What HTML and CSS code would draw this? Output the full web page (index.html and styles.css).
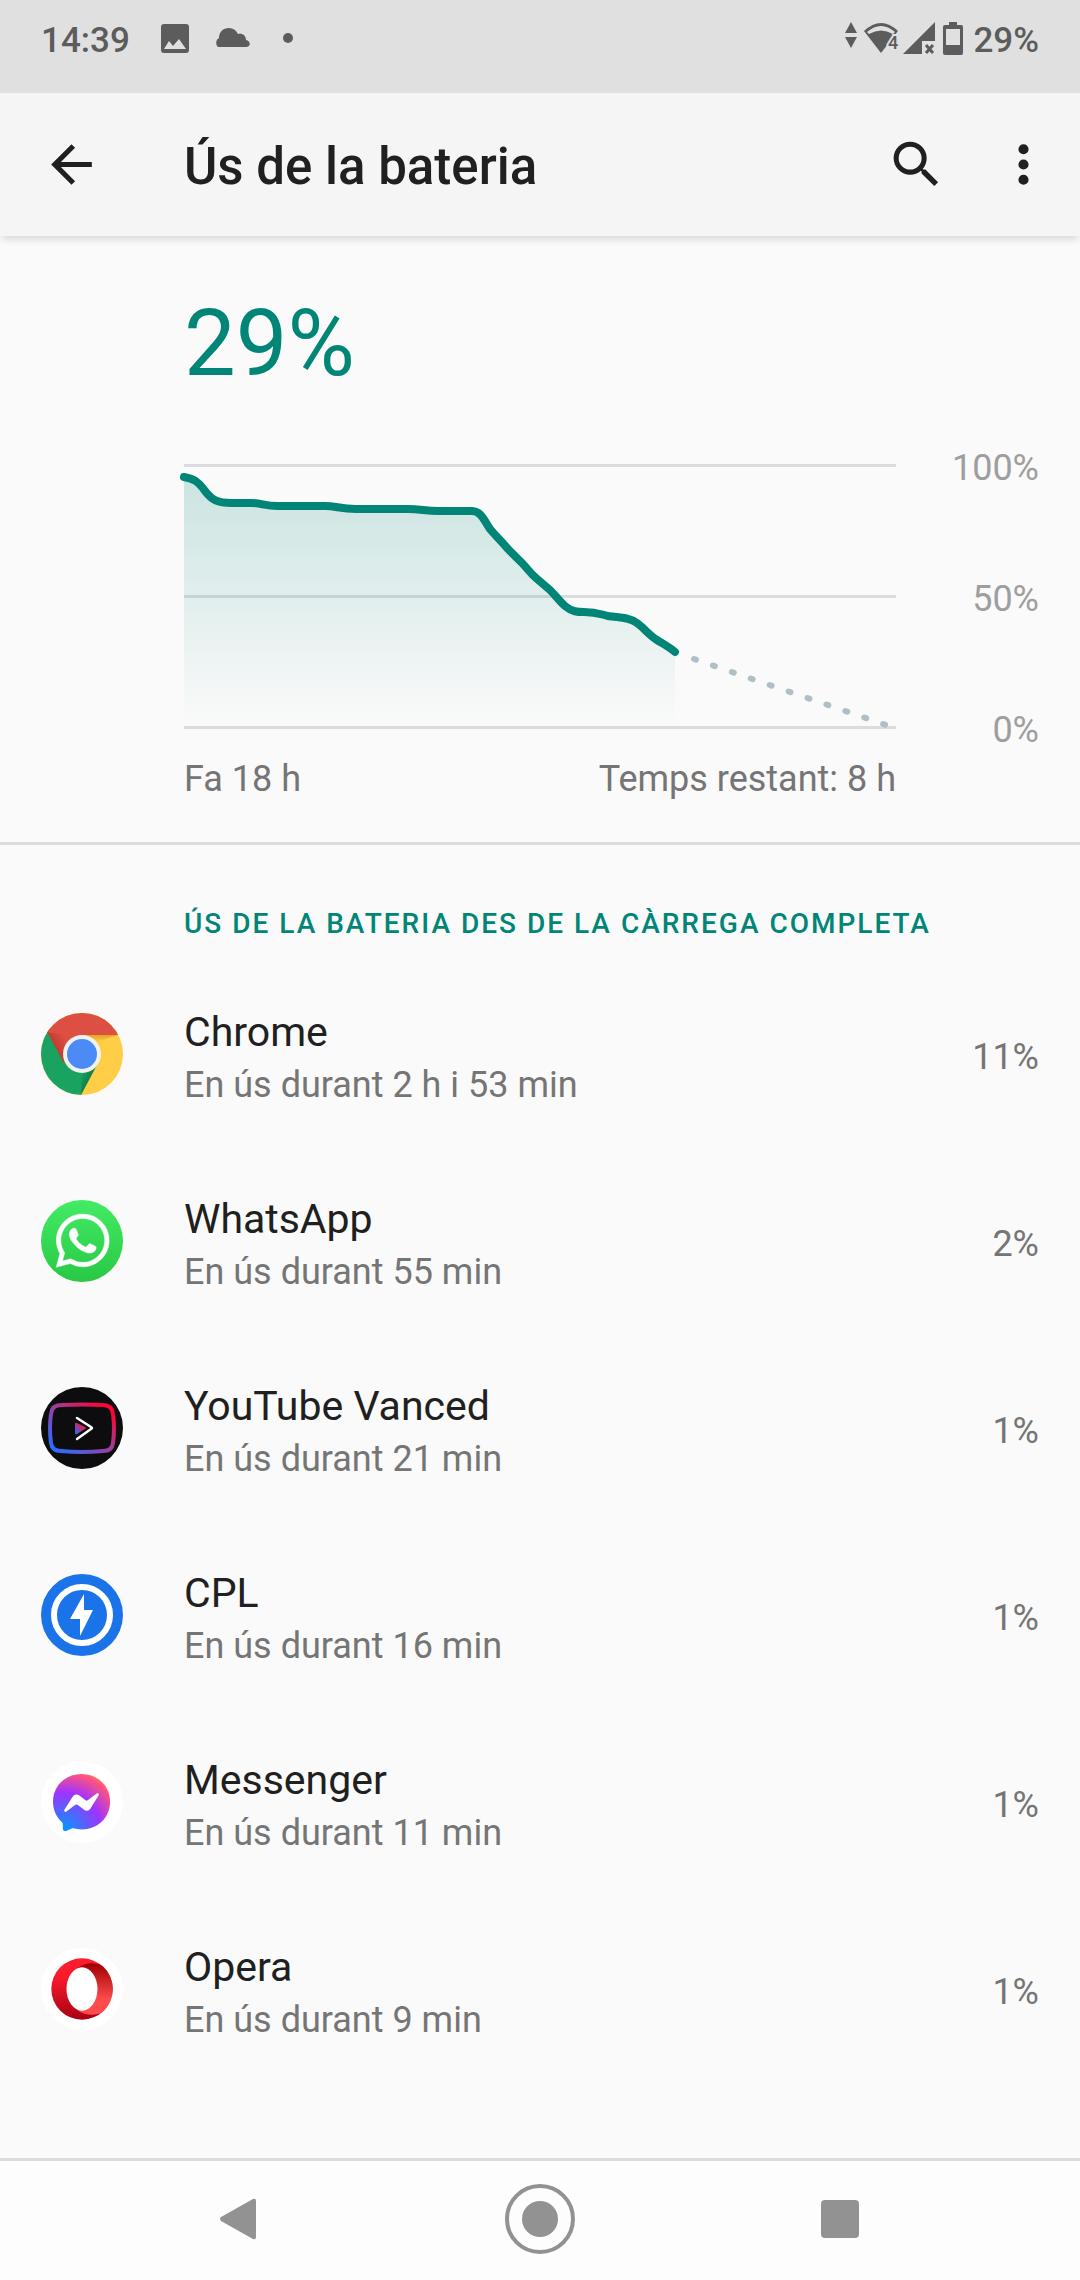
FILE: index.html
```
<!DOCTYPE html>
<html lang="ca">
<head>
	<meta charset="utf-8">
	<meta name="viewport" content="width=device-width, initial-scale=1">
	<title>Ús de la bateria</title>

	<link rel="stylesheet" href="styles.css">
</head>
<body>

	<div class="status-bar">
		<div class="status-left">
			<span class="clock">14:39</span>
			<svg class="status-icon" width="30" height="34" viewBox="0 0 30 34"><path fill-rule="evenodd" d="M4 3h22a3 3 0 0 1 3 3v23a3 3 0 0 1-3 3H4a3 3 0 0 1-3-3V6a3 3 0 0 1 3-3zM4 28h22l-7-10-6 7-4-5z"/></svg>
			<svg class="status-icon" width="36" height="34" viewBox="0 0 36 34"><path d="M4 26a4 5 0 0 1 1-9c0-6 4-10 10-10 4 0 7 2 9 6 5-1 8 2 8 6 5 1 5 7 0 7z"/></svg>
			<svg class="status-icon" width="20" height="34" viewBox="0 0 20 34"><circle cx="14" cy="17" r="5"/></svg>
		</div>
		<div class="status-right">
			<svg class="status-icon" width="10" height="34" viewBox="0 0 10 34"><path d="M5 1l6 11H-1zM-1 16h12L5 27z"/></svg>
			<svg class="status-icon" width="31" height="34" viewBox="0 0 31 34">
				<path d="M0 10Q17-6 34 10L17 32z"/>
				<path class="status-cut" d="M3 11Q17-1 31 11L29 13Q17 6 5 13z"/>
				<text class="wifi-digit" x="24" y="28">4</text>
			</svg>
			<svg class="status-icon" width="32" height="34" viewBox="0 0 32 34"><path d="M32 1v19H19v13H0z"/><path class="status-cross" d="M23 24l7 8M30 24l-7 8"/></svg>
			<svg class="status-icon" width="20" height="34" viewBox="0 0 20 34"><path fill-rule="evenodd" d="M6 1h8v3h4a2 2 0 0 1 2 2v26a2 2 0 0 1-2 2H2a2 2 0 0 1-2-2V6a2 2 0 0 1 2-2h4zM3 8v16h14V8z"/></svg>
			<span class="battery-level">29%</span>
		</div>
	</div>

	<header class="toolbar">
		<button class="icon-button" aria-label="Enrere">
			<svg width="61" height="61" viewBox="0 0 24 24"><path d="M20 11H7.83l5.59-5.59L12 4l-8 8 8 8 1.41-1.41L7.83 13H20z"/></svg>
		</button>
		<h1 class="title">Ús de la bateria</h1>
		<button class="icon-button" aria-label="Cerca">
			<svg width="61" height="61" viewBox="0 0 24 24"><path d="M15.5 14h-.79l-.28-.27A6.47 6.47 0 0 0 16 9.5 6.5 6.5 0 1 0 9.5 16c1.61 0 3.09-.59 4.23-1.57l.27.28v.79l5 4.99L20.49 19zm-6 0A4.5 4.5 0 1 1 14 9.5 4.5 4.5 0 0 1 9.5 14z"/></svg>
		</button>
		<button class="icon-button" aria-label="Més opcions">
			<svg width="61" height="61" viewBox="0 0 24 24"><path d="M12 8a2 2 0 1 0 0-4 2 2 0 0 0 0 4zm0 2a2 2 0 1 0 0 4 2 2 0 0 0 0-4zm0 6a2 2 0 1 0 0 4 2 2 0 0 0 0-4z"/></svg>
		</button>
	</header>

	<main class="content">
		<section class="summary">
			<div class="level">29%</div>
			<div class="chart">
				<svg class="graph" viewBox="0 0 712 265">
					<defs>
						<linearGradient id="fade" gradientUnits="userSpaceOnUse" x1="0" y1="0" x2="0" y2="262">
							<stop offset="0" stop-color="#008577" stop-opacity=".2"/>
							<stop offset="1" stop-color="#008577" stop-opacity="0"/>
						</linearGradient>
					</defs>
					<path class="grid-line" d="M0 0h712v3H0zM0 131h712v3H0zM0 262h712v3H0z"/>
					<path fill="url(#fade)" d="M0 13C10 15 14 17 21 27C28 36 33 39 48 39H67C78 39 80 42 94 42H141C152 42 156 45 172 45H224C236 45 242 47 254 47H288C296 47 299 54 306 65C311 71 317 77 324 85L338 99C343 104 346 109 352 114L366 126C372 132 376 138 381 142C388 148 394 148 400 148C412 148 416 150 424 152C434 154 442 152 453 159C460 164 465 171 473 176C481 181 485 183 491 188V262H0z"/>
					<path class="forecast" d="M510 195L702 261"/>
					<path class="curve" d="M0 13C10 15 14 17 21 27C28 36 33 39 48 39H67C78 39 80 42 94 42H141C152 42 156 45 172 45H224C236 45 242 47 254 47H288C296 47 299 54 306 65C311 71 317 77 324 85L338 99C343 104 346 109 352 114L366 126C372 132 376 138 381 142C388 148 394 148 400 148C412 148 416 150 424 152C434 154 442 152 453 159C460 164 465 171 473 176C481 181 485 183 491 188"/>
				</svg>
				<div class="scale">
					<span>100%</span>
					<span>50%</span>
					<span>0%</span>
				</div>
				<div class="times">
					<span>Fa 18 h</span>
					<span>Temps restant: 8 h</span>
				</div>
			</div>
		</section>

		<section>
			<h2 class="section-title">Ús de la bateria des de la càrrega completa</h2>
			<ul class="apps">
				<li>
					<a class="app" href="#">
						<svg class="app-icon" viewBox="0 0 82 82">
							<defs>
								<clipPath id="round"><circle cx="41" cy="41" r="41"/></clipPath>
								<linearGradient id="redShade" gradientUnits="userSpaceOnUse" x1="14" y1="35" x2="26" y2="28">
									<stop offset="0" stop-color="#a52714" stop-opacity=".5"/>
									<stop offset="1" stop-color="#a52714" stop-opacity="0"/>
								</linearGradient>
								<linearGradient id="yellowShade" x1="0" y1="0" x2="0" y2="1">
									<stop offset="0" stop-color="#c47b00" stop-opacity=".5"/>
									<stop offset="1" stop-color="#c47b00" stop-opacity="0"/>
								</linearGradient>
								<linearGradient id="greenShade" gradientUnits="userSpaceOnUse" x1="50" y1="66" x2="40" y2="61">
									<stop offset="0" stop-color="#055524" stop-opacity=".5"/>
									<stop offset="1" stop-color="#055524" stop-opacity="0"/>
								</linearGradient>
							</defs>
							<g clip-path="url(#round)">
								<path fill="#ffcd46" d="M0 0h82v82H0z"/>
								<path fill="url(#yellowShade)" d="M41 22h36L55 29z"/>
								<path fill="#1aa260" d="M-5 0L41 41l16 9-17 32H0z"/>
								<path fill="url(#greenShade)" d="M41 52l16-2-17 32z"/>
								<path fill="#dd4f43" d="M-4 0h86v22H41L23 50z"/>
								<path fill="url(#redShade)" d="M6 19l20 3v22l-3 6z"/>
							</g>
							<circle cx="41" cy="41" r="19" fill="#f1f1f1"/>
							<circle cx="41" cy="41" r="15" fill="#4c8bf5"/>
						</svg>
						<span class="app-text">
							<span class="app-name">Chrome</span>
							<span class="app-usage">En ús durant 2 h i 53 min</span>
						</span>
						<span class="app-percent">11%</span>
					</a>
				</li>
				<li>
					<a class="app" href="#">
						<svg class="app-icon" viewBox="0 0 82 82">
							<defs>
								<linearGradient id="green" x1="0" y1="0" x2="0" y2="1">
									<stop offset="0" stop-color="#43eb64"/>
									<stop offset="1" stop-color="#28c845"/>
								</linearGradient>
							</defs>
							<circle cx="41" cy="41" r="41" fill="url(#green)"/>
							<path fill="#fff" stroke="#fff" stroke-width=".2" transform="translate(15 14) scale(2.22)" d="M17.472 14.382c-.297-.149-1.758-.867-2.03-.967-.273-.099-.471-.148-.67.15-.197.297-.767.966-.94 1.164-.173.199-.347.223-.644.075-.297-.15-1.255-.463-2.39-1.475-.883-.788-1.48-1.761-1.653-2.059-.173-.297-.018-.458.13-.606.134-.133.298-.347.446-.52.149-.174.198-.298.298-.497.099-.198.05-.371-.025-.52-.075-.149-.669-1.612-.916-2.207-.242-.579-.487-.5-.669-.51-.173-.008-.371-.01-.57-.01-.198 0-.52.074-.792.372-.272.297-1.04 1.016-1.04 2.479 0 1.462 1.065 2.875 1.213 3.074.149.198 2.096 3.2 5.077 4.487.709.306 1.262.489 1.694.625.712.227 1.36.195 1.871.118.571-.085 1.758-.719 2.006-1.413.248-.694.248-1.289.173-1.413-.074-.124-.272-.198-.57-.347m-5.421 7.403h-.004a9.87 9.87 0 01-5.031-1.378l-.361-.214-3.741.982.998-3.648-.235-.374a9.86 9.86 0 01-1.51-5.26c.001-5.45 4.436-9.884 9.888-9.884 2.64 0 5.122 1.03 6.988 2.898a9.825 9.825 0 012.893 6.994c-.003 5.45-4.437 9.884-9.885 9.884m8.413-18.297A11.815 11.815 0 0012.05 0C5.495 0 .16 5.335.157 11.892c0 2.096.547 4.142 1.588 5.945L.057 24l6.305-1.654a11.882 11.882 0 005.683 1.448h.005c6.554 0 11.89-5.335 11.893-11.893a11.821 11.821 0 00-3.48-8.413Z"/>
						</svg>
						<span class="app-text">
							<span class="app-name">WhatsApp</span>
							<span class="app-usage">En ús durant 55 min</span>
						</span>
						<span class="app-percent">2%</span>
					</a>
				</li>
				<li>
					<a class="app" href="#">
						<svg class="app-icon" viewBox="0 0 82 82">
							<defs>
								<linearGradient id="neon" x1="0" y1="1" x2="1" y2="0">
									<stop offset=".08" stop-color="#2a6cff"/>
									<stop offset=".5" stop-color="#9a3f9c"/>
									<stop offset=".9" stop-color="#ff0436"/>
								</linearGradient>
								<linearGradient id="neonPlay" x1="0" y1="1" x2="1" y2="0">
									<stop offset=".1" stop-color="#3a66f0"/>
									<stop offset=".6" stop-color="#c8285f"/>
								</linearGradient>
							</defs>
							<circle cx="41" cy="41" r="41" fill="#0d0d0f"/>
							<path fill="none" stroke="url(#neon)" stroke-width="4" d="M20 18Q41 17 62 18Q71 18 72 27Q74 41 72 56Q71 64 62 64Q41 66 20 64Q11 64 10 56Q8 41 10 27Q11 18 20 18z"/>
							<path fill="url(#neonPlay)" d="M34 37q0-2 2-1l8 4q2 1 0 2l-8 5q-2 1-2-1z"/>
							<path fill="none" stroke="#fff" stroke-width="2.5" stroke-linecap="round" stroke-linejoin="round" d="M36 31l14 9q2 1 0 2L36 52"/>
						</svg>
						<span class="app-text">
							<span class="app-name">YouTube Vanced</span>
							<span class="app-usage">En ús durant 21 min</span>
						</span>
						<span class="app-percent">1%</span>
					</a>
				</li>
				<li>
					<a class="app" href="#">
						<svg class="app-icon" viewBox="0 0 82 82">
							<circle cx="41" cy="41" r="41" fill="#1a73e8"/>
							<circle cx="41" cy="41" r="28" fill="none" stroke="#fff" stroke-width="6"/>
							<path fill="#fff" d="M43 20v16h9L39 62V45H29z"/>
						</svg>
						<span class="app-text">
							<span class="app-name">CPL</span>
							<span class="app-usage">En ús durant 16 min</span>
						</span>
						<span class="app-percent">1%</span>
					</a>
				</li>
				<li>
					<a class="app" href="#">
						<svg class="app-icon" viewBox="0 0 82 82">
							<defs>
								<radialGradient id="bubble" cx=".19" cy=".99" r="1.09">
									<stop offset="0" stop-color="#09f"/>
									<stop offset=".61" stop-color="#a033ff"/>
									<stop offset=".93" stop-color="#ff5280"/>
									<stop offset="1" stop-color="#ff7061"/>
								</radialGradient>
							</defs>
							<circle cx="41" cy="41" r="41" fill="#fff"/>
							<path fill="url(#bubble)" transform="translate(12 13) scale(2.38)" d="M12 0C5.24 0 0 4.95 0 11.64c0 3.5 1.43 6.52 3.77 8.61.2.17.31.42.32.69l.07 2.13c.02.68.72 1.12 1.35.85l2.38-1.05c.2-.09.43-.1.64-.05 1.09.3 2.25.46 3.47.46 6.76 0 12-4.95 12-11.64S18.76 0 12 0Zm7.2 8.96-3.52 5.6c-.56.88-1.75 1.1-2.6.47l-2.8-2.1a.72.72 0 0 0-.87 0l-3.78 2.87c-.5.38-1.16-.22-.83-.76l3.52-5.59a1.8 1.8 0 0 1 2.6-.48l2.8 2.1c.26.2.61.2.87 0l3.78-2.86c.5-.39 1.16.21.83.75Z"/>
						</svg>
						<span class="app-text">
							<span class="app-name">Messenger</span>
							<span class="app-usage">En ús durant 11 min</span>
						</span>
						<span class="app-percent">1%</span>
					</a>
				</li>
				<li>
					<a class="app" href="#">
						<svg class="app-icon" viewBox="0 0 82 82">
							<defs>
								<linearGradient id="operaRing" x1="0" y1="0" x2="0" y2="1">
									<stop offset="0" stop-color="#ff1b2d"/>
									<stop offset=".3" stop-color="#fa1a2c"/>
									<stop offset="1" stop-color="#a70014"/>
								</linearGradient>
								<linearGradient id="operaInner" x1="0" y1="0" x2="0" y2="1">
									<stop offset="0" stop-color="#9c0000"/>
									<stop offset=".7" stop-color="#ff4b4b"/>
								</linearGradient>
							</defs>
							<circle cx="41" cy="41" r="41" fill="#fff"/>
							<circle cx="41" cy="41" r="30.7" fill="url(#operaRing)"/>
							<path fill="url(#operaInner)" d="M36 20C45 14 55 14 61.5 18A30.7 30.7 0 0 1 61.5 64C55 68 45 68 36 62z"/>
							<ellipse cx="41" cy="41" rx="15.5" ry="21.7" fill="#fff"/>
						</svg>
						<span class="app-text">
							<span class="app-name">Opera</span>
							<span class="app-usage">En ús durant 9 min</span>
						</span>
						<span class="app-percent">1%</span>
					</a>
				</li>
			</ul>
		</section>
	</main>

	<nav class="nav-bar">
		<button class="nav-button" aria-label="Enrere">
			<svg width="72" height="72" viewBox="0 0 72 72"><path d="M17 34L49 16q3-1 3 2v36q0 3-3 2L17 38q-2-2 0-4z"/></svg>
		</button>
		<button class="nav-button" aria-label="Inici">
			<svg width="72" height="72" viewBox="0 0 72 72"><circle cx="36" cy="36" r="18"/><circle class="nav-ring" cx="36" cy="36" r="33"/></svg>
		</button>
		<button class="nav-button" aria-label="Recents">
			<svg width="72" height="72" viewBox="0 0 72 72"><rect x="17" y="17" width="38" height="38" rx="4"/></svg>
		</button>
	</nav>

</body>
</html>
```

FILE: styles.css
```
* {
	box-sizing: border-box;
}

body {
	display: flex;
	flex-direction: column;
	min-height: 100vh;
	margin: 0;
	background-color: #fafafa;
	color: #202020;
	font-family: Roboto, "Noto Sans", sans-serif;
	font-size: 36px;
	line-height: 42px;
}

button {
	padding: 0;
	border: 0;
	background: none;
	color: inherit;
}

svg {
	display: block;
	overflow: visible;
}

/* Status bar */
.status-bar {
	display: flex;
	justify-content: space-between;
	padding: 20px 41px 31px;
	background-color: #e0e0e0;
	color: #5c5c5c;
	font-size: 35px;
	font-weight: 500;
}

.status-left,
.status-right {
	display: flex;
	align-items: center;
}

.status-left {
	gap: 24px;
}

.status-right {
	gap: 8px;
}

.clock {
	margin-right: 6px;
}

.battery-level {
	margin-left: 2px;
}

.status-icon {
	margin-bottom: 6px;
	fill: #5c5c5c;
}

.status-cut {
	fill: #e0e0e0;
}

.status-cross {
	stroke: #5c5c5c;
	stroke-width: 3px;
}

.wifi-digit {
	font-size: 18px;
	stroke: #e0e0e0;
	stroke-width: 4px;
	paint-order: stroke;
}

/* Toolbar */
.toolbar {
	display: flex;
	align-items: center;
	height: 143px;
	padding: 0 26px 0 41px;
	background-color: #f5f5f5;
	box-shadow: 0 5px 8px -2px rgba(0, 0, 0, 0.15);
}

.icon-button {
	fill: #202020;
}

.icon-button:last-child {
	margin-left: 46px;
}

.title {
	flex: 1;
	margin: 0 0 0 82px;
	padding-top: 4px;
	font-size: 51px;
	font-weight: 500;
	line-height: 60px;
}

/* Battery level and chart */
.content {
	flex: 1;
}

.summary {
	padding: 54px 41px 42px 184px;
	border-bottom: 3px solid #dadce0;
}

.level {
	margin-bottom: 49px;
	color: #008577;
	font-size: 92px;
	line-height: 108px;
}

.chart {
	display: grid;
	grid-template-columns: 1fr 143px;
	row-gap: 7px;
}

.graph {
	width: 100%;
	margin-top: 17px;
}

.grid-line {
	fill: #dadce0;
}

.curve {
	fill: none;
	stroke: #008577;
	stroke-width: 8px;
	stroke-linecap: round;
	stroke-linejoin: round;
}

.forecast {
	fill: none;
	stroke: #b0bec5;
	stroke-width: 6px;
	stroke-linecap: round;
	stroke-dasharray: 2 18;
}

.scale {
	display: flex;
	flex-direction: column;
	justify-content: space-between;
	height: 304px;
	color: #9e9e9e;
	text-align: right;
}

.times {
	display: flex;
	justify-content: space-between;
	color: #757575;
}

/* App list */
.section-title {
	margin: 0;
	padding: 62px 41px 23px 184px;
	color: #008577;
	font-size: 28px;
	font-weight: 500;
	line-height: 33px;
	letter-spacing: 2px;
	text-transform: uppercase;
}

.apps {
	margin: 0;
	padding: 0;
	list-style: none;
}

.app {
	display: flex;
	align-items: center;
	min-height: 187px;
	padding: 0 41px;
	color: #202020;
	text-decoration: none;
}

.app-icon {
	width: 82px;
	height: 82px;
	margin: 0 61px 5px 0;
}

.app-text {
	display: flex;
	flex: 1;
	flex-direction: column;
	gap: 8px;
}

.app-name {
	font-size: 41px;
	line-height: 48px;
}

.app-usage,
.app-percent {
	color: #757575;
}

/* Navigation bar */
.nav-bar {
	display: grid;
	grid-template-columns: repeat(3, 1fr);
	height: 122px;
	padding: 0 90px 3px;
	border-top: 3px solid #dcdcdc;
	background-color: #fdfdfd;
}

.nav-button {
	display: flex;
	align-items: center;
	justify-content: center;
	fill: #929292;
}

.nav-ring {
	fill: none;
	stroke: #929292;
	stroke-width: 4px;
}
```
